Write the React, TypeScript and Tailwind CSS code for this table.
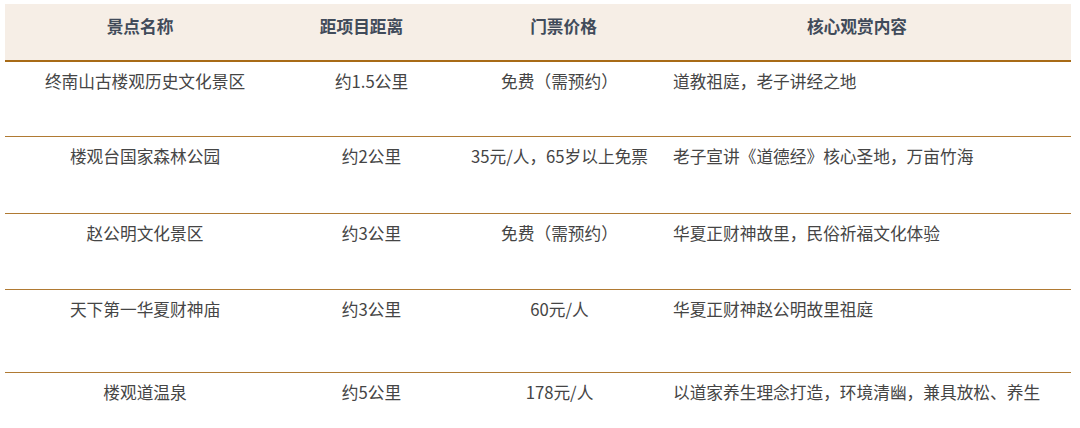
const rows = [
    { name: "终南山古楼观历史文化景区", dist: "约1.5公里", price: "免费（需预约）", desc: "道教祖庭，老子讲经之地", h: "h-[75px]" },
    { name: "楼观台国家森林公园", dist: "约2公里", price: "35元/人，65岁以上免票", desc: "老子宣讲《道德经》核心圣地，万亩竹海", h: "h-[77px]" },
    { name: "赵公明文化景区", dist: "约3公里", price: "免费（需预约）", desc: "华夏正财神故里，民俗祈福文化体验", h: "h-[76px]" },
    { name: "天下第一华夏财神庙", dist: "约3公里", price: "60元/人", desc: "华夏正财神赵公明故里祖庭", h: "h-[83px]" },
    { name: "楼观道温泉", dist: "约5公里", price: "178元/人", desc: "以道家养生理念打造，环境清幽，兼具放松、养生", h: "h-[60px]" },
];

const cols = "grid grid-cols-[280px_165px_217px_404px]";

export default function App() {
    return (
        <div
            className="w-[1080px] h-[428px] overflow-hidden bg-white pt-[4px] pl-[5px]"
            style={{ fontFamily: '"Noto Sans CJK SC", "Noto Sans", sans-serif' }}
        >
            <div className="w-[1066px]">
                <div className={`${cols} h-[58px] bg-[#f6eee6] border-b-[2px] border-[#a86b17] text-[16.7px] leading-6 font-bold text-[#414b5a]`}>
                    <div className="pt-[10px] text-center pr-[10px]">景点名称</div>
                    <div className="pt-[10px] text-center pr-[12px]">距项目距离</div>
                    <div className="pt-[10px] text-center pl-[10px]">门票价格</div>
                    <div className="pt-[10px] text-center pr-[24px]">核心观赏内容</div>
                </div>
                {rows.map((r, i) => (
                    <div
                        key={i}
                        className={`${cols} ${r.h} text-[16.7px] leading-6 text-[#454545] ${i < rows.length - 1 ? "border-b border-[#b07a33]" : ""}`}
                    >
                        <div className="pt-[7px] text-center">{r.name}</div>
                        <div className="pt-[7px] text-center pl-[8px]">{r.dist}</div>
                        <div className="pt-[7px] text-center pl-[2px]">{r.price}</div>
                        <div className="pt-[7px] pl-[6px]">{r.desc}</div>
                    </div>
                ))}
            </div>
        </div>
    );
}
